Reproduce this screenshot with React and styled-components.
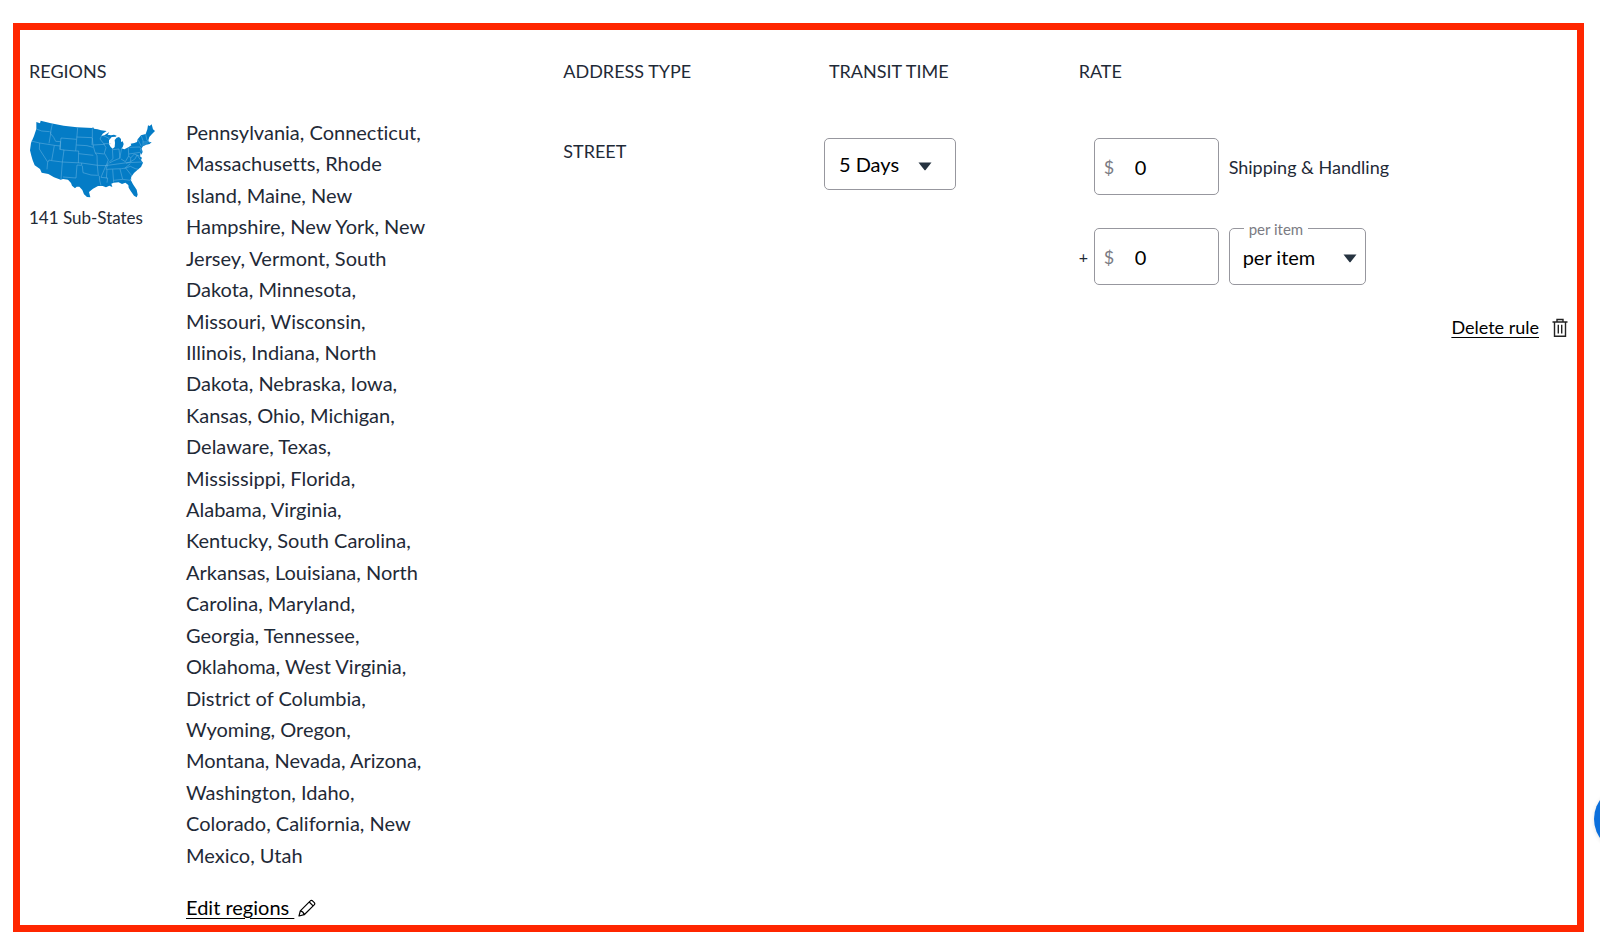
import styled, { createGlobalStyle } from "styled-components";

const GlobalStyle = createGlobalStyle`
  * {
    box-sizing: border-box;
  }
  body {
    margin: 0;
    background-color: white;
    color: #1f2a37;
    font-family: Lato, "Open Sans", sans-serif;
    font-size: 18px;
    font-variant-ligatures: none;
    line-height: 24px;
    overflow-x: hidden;
  }
`;

const Page = styled.main`
  display: flex;
  min-height: 100vh;
  padding: 23px 16px 14px 13px;
`;
const Rules = styled.table`
  flex: 1;
  display: flex;
  flex-direction: column;
  border: 7px solid #ff2600;
  padding: 29px 9px 2px 9px;
`;
const Head = styled.thead`
  display: block;
  margin-bottom: 34px;
`;
const Body = styled.tbody`
  flex: 1;
  display: flex;
`;
const Row = styled.tr`
  flex: 1;
  display: grid;
  grid-template-columns: 535fr 261fr 255fr 490fr;
`;
const HeadCell = styled.th`
  padding: 0 0 0 ${(props) => (props.$inset ? "5px" : "0")};
  font-weight: 400;
  text-align: left;
`;
const Cell = styled.td`
  padding: ${(props) => props.$top || "0"} 0 0;
`;

const RegionCell = styled.td`
  display: flex;
  gap: 31px;
  padding: 0;
`;
const Country = styled.div`
  flex: none;
  width: 126px;
`;
const CountryMap = styled.svg`
  display: block;
  width: 126px;
  height: 78px;
  margin: 3px 0 7px;
`;
const CountryNote = styled.span`
  font-size: 17px;
  white-space: nowrap;
`;
const RegionDetail = styled.div`
  display: flex;
  flex-direction: column;
  align-items: flex-start;
  gap: 21px;
`;
const RegionList = styled.div`
  flex: 1;
  display: flex;
  flex-direction: column;
  justify-content: space-between;
  font-size: 20px;
  line-height: 31px;
  white-space: nowrap;
`;
const RegionLine = styled.span``;

const ActionLink = styled.a`
  display: inline-flex;
  align-items: center;
  gap: ${(props) => props.$gap || "0"};
  color: black;
  font-size: ${(props) => (props.$large ? "20px" : "18px")};
  line-height: 31px;
  text-decoration: none;
`;
const ActionText = styled.span`
  white-space: pre;
  text-decoration: underline;
  text-decoration-thickness: 1px;
  text-underline-offset: 3px;
`;

const SelectBox = styled.div`
  position: relative;
  display: flex;
  align-items: center;
  width: ${(props) => props.$width};
`;
const Select = styled.select`
  appearance: none;
  width: 100%;
  height: ${(props) => props.$height};
  padding: 0 36px 0 ${(props) => props.$indent};
  border: 1px solid #97979e;
  border-radius: 5px;
  background-color: white;
  color: black;
  font-family: inherit;
  font-size: 20px;
`;
const Caret = styled.svg`
  position: absolute;
  right: ${(props) => props.$right};
  width: 14px;
  height: 9px;
  margin-top: 4px;
  fill: #263340;
  pointer-events: none;
`;
const FloatingLabel = styled.label`
  position: absolute;
  top: -9px;
  left: 15px;
  padding: 0 5px;
  background-color: white;
  color: #7b7b83;
  font-size: 15px;
  line-height: 20px;
`;

const Rate = styled.div`
  display: flex;
  align-items: center;
  height: 57px;
  margin-bottom: 33px;
`;
const Plus = styled.span`
  width: 15px;
  font-size: 16px;
`;
const Money = styled.div`
  position: relative;
  display: flex;
  align-items: center;
  width: 125px;
  margin-right: 10px;
`;
const Currency = styled.span`
  position: absolute;
  left: 10px;
  color: #7b7b83;
`;
const Amount = styled.input`
  width: 100%;
  height: 57px;
  padding: 0 10px 0 40px;
  border: 1px solid #97979e;
  border-radius: 5px;
  color: black;
  font-family: inherit;
  font-size: 20px;
`;
const RateLabel = styled.label``;
const Actions = styled.div`
  display: flex;
  justify-content: flex-end;
  margin-top: -6px;
`;
const Chat = styled.button`
  position: fixed;
  right: -60px;
  top: 786px;
  width: 66px;
  height: 66px;
  padding: 0;
  border: none;
  border-radius: 50%;
  background-color: #0b6fdc;
  box-shadow: 0 1px 4px rgba(0, 0, 0, 0.12);
`;

const regionLines = [
  "Pennsylvania, Connecticut,",
  "Massachusetts, Rhode",
  "Island, Maine, New",
  "Hampshire, New York, New",
  "Jersey, Vermont, South",
  "Dakota, Minnesota,",
  "Missouri, Wisconsin,",
  "Illinois, Indiana, North",
  "Dakota, Nebraska, Iowa,",
  "Kansas, Ohio, Michigan,",
  "Delaware, Texas,",
  "Mississippi, Florida,",
  "Alabama, Virginia,",
  "Kentucky, South Carolina,",
  "Arkansas, Louisiana, North",
  "Carolina, Maryland,",
  "Georgia, Tennessee,",
  "Oklahoma, West Virginia,",
  "District of Columbia,",
  "Wyoming, Oregon,",
  "Montana, Nevada, Arizona,",
  "Washington, Idaho,",
  "Colorado, California, New",
  "Mexico, Utah",
];

const UsaMap = () => (
  <CountryMap viewBox="16 22 378 234" aria-hidden="true">
    <path
      fill="#047cc6"
      d="M38 28L49 32L51 24L82 32L120 39L160 44L206 46L208 43L211 48L222 50L232 53L249 55L237 63L233 70L242 68L249 63L257 58L252 66L262 68L271 66L279 69L276 72L264 73L259 80L262 75L256 83L256 94L261 103L267 108L273 103L274 91L273 82L279 75L286 73L292 79L292 88L297 86L300 94L297 104L293 107L302 110L314 104L323 98L321 93L332 91L340 88L342 80L352 68L366 64L371 50L373 38L378 40L384 35L388 50L394 55L385 64L377 73L374 83L376 89L384 88L378 94L368 96L358 101L354 107L357 118L352 127L349 119L350 132L355 135L352 142L358 150L352 163L342 171L331 181L323 192L321 201L328 215L339 231L342 246L339 254L331 249L321 235L315 225L314 217L305 210L295 214L285 209L270 210L263 213L266 223L257 219L247 224L237 220L223 220L208 228L196 238L200 254L190 253L181 245L176 232L167 222L159 222L154 227L145 219L142 211L133 201L118 199L111 201L91 194L74 184L54 180L49 169L33 158L27 143L23 129L19 113L22 91L31 70L38 49Z"
    />
    <path
      fill="none"
      stroke="#6ab4e0"
      strokeWidth="1.6"
      d="M38 49L54 55L78 57M86 34L80 62L90 74L96 86L111 87L110 110M82 57L76 92M22 85L48 91L92 98L110 100M48 91L47 109L72 148L70 170M92 98L84 144L76 142L73 148M84 144L116 148L174 151L222 158M112 76L159 80L156 115L120 112M112 76L108 110L121 112L116 149L112 200M162 45L159 80M159 73L205 75M158 97L190 99L208 104M165 123L209 128M156 115L165 115L164 151M174 151L174 158L160 157L157 196L118 193M176 159L178 180L202 187L222 188M206 47L206 76L208 97L243 95M208 97L214 119L220 129L221 158L224 190M214 121L242 124M206 76L205 97M234 69L229 79L240 93L247 105L242 121L254 142L250 152L245 163L232 194L252 196L250 210M222 158L248 159M227 190L228 203L232 219M240 93L261 93M237 68L255 76L258 82M266 108L268 138L256 149M268 111L286 109L289 137M294 107L288 137L268 145L258 151M245 159L310 150L355 148M254 150L247 170L294 168L306 166M250 171L248 197M267 170L270 210M289 169L297 200L270 203M297 200L319 203L325 198M306 166L325 190M306 166L320 161L335 168L344 170M303 167L320 153M314 105L315 130L305 147L292 139M316 124L349 119M315 130L321 136L332 124L347 130M321 136L321 147L307 152M321 147L334 139L340 127L350 141M353 70L358 84L358 100M343 81L353 101M366 64L370 83L378 87M358 88L374 88M360 94L371 94M350 109L353 117M318 104L349 103L354 111"
    />
  </CountryMap>
);

const ArrowDown = ({ $right }) => (
  <Caret $right={$right} viewBox="0 0 14 9" aria-hidden="true">
    <path d="M0.5 0.5H13.5L7.8 7.8Q7 8.8 6.2 7.8Z" />
  </Caret>
);

const PencilIcon = () => (
  <svg width="18" height="18" viewBox="0 0 18 18" fill="none" stroke="black" strokeWidth="1.2" strokeLinejoin="round" aria-hidden="true">
    <path d="M1 17L2.3 11.9L12.3 1.9Q13.3 0.8 14.5 1.8L16.3 3.6Q17.3 4.7 16.2 5.8L6.2 15.7ZM2.3 11.9Q5.2 12.4 6.2 15.7M11.2 3L15.1 6.9" />
  </svg>
);

const TrashIcon = () => (
  <svg width="16" height="20" viewBox="0 0 16 20" fill="none" stroke="#222" strokeWidth="1.4" aria-hidden="true">
    <path d="M0.5 4H15.5M5 4V1.5H11V4M2.5 4V18.3H13.5V4M6.3 6.8V15.5M9.7 6.8V15.5" />
  </svg>
);

const App = () => {
  return (
    <>
      <GlobalStyle />
      <Page>
        <Rules>
          <Head>
            <Row>
              <HeadCell>REGIONS</HeadCell>
              <HeadCell>ADDRESS TYPE</HeadCell>
              <HeadCell $inset>TRANSIT TIME</HeadCell>
              <HeadCell>RATE</HeadCell>
            </Row>
          </Head>
          <Body>
            <Row>
              <RegionCell>
                <Country>
                  <UsaMap />
                  <CountryNote>141 Sub-States</CountryNote>
                </Country>
                <RegionDetail>
                  <RegionList>
                    {regionLines.map((line) => (
                      <RegionLine key={line}>{line}</RegionLine>
                    ))}
                  </RegionList>
                  <ActionLink href="#regions" $large $gap="4px">
                    <ActionText>{"Edit regions "}</ActionText>
                    <PencilIcon />
                  </ActionLink>
                </RegionDetail>
              </RegionCell>
              <Cell $top="22px">STREET</Cell>
              <Cell $top="21px">
                <SelectBox $width="132px">
                  <Select $height="52px" $indent="14px" aria-label="Transit time">
                    <option>5 Days</option>
                  </Select>
                  <ArrowDown $right="24px" />
                </SelectBox>
              </Cell>
              <Cell $top="21px">
                <Rate>
                  <Plus />
                  <Money>
                    <Currency>$</Currency>
                    <Amount id="shipping" defaultValue="0" />
                  </Money>
                  <RateLabel htmlFor="shipping">Shipping &amp; Handling</RateLabel>
                </Rate>
                <Rate>
                  <Plus>+</Plus>
                  <Money>
                    <Currency>$</Currency>
                    <Amount aria-label="Additional rate" defaultValue="0" />
                  </Money>
                  <SelectBox $width="137px">
                    <Select id="unit" $height="57px" $indent="13px">
                      <option>per item</option>
                    </Select>
                    <FloatingLabel htmlFor="unit">per item</FloatingLabel>
                    <ArrowDown $right="9px" />
                  </SelectBox>
                </Rate>
                <Actions>
                  <ActionLink href="#delete" $gap="13px">
                    <ActionText>Delete rule</ActionText>
                    <TrashIcon />
                  </ActionLink>
                </Actions>
              </Cell>
            </Row>
          </Body>
        </Rules>
      </Page>
      <Chat aria-label="Chat" />
    </>
  );
};

export default App;
